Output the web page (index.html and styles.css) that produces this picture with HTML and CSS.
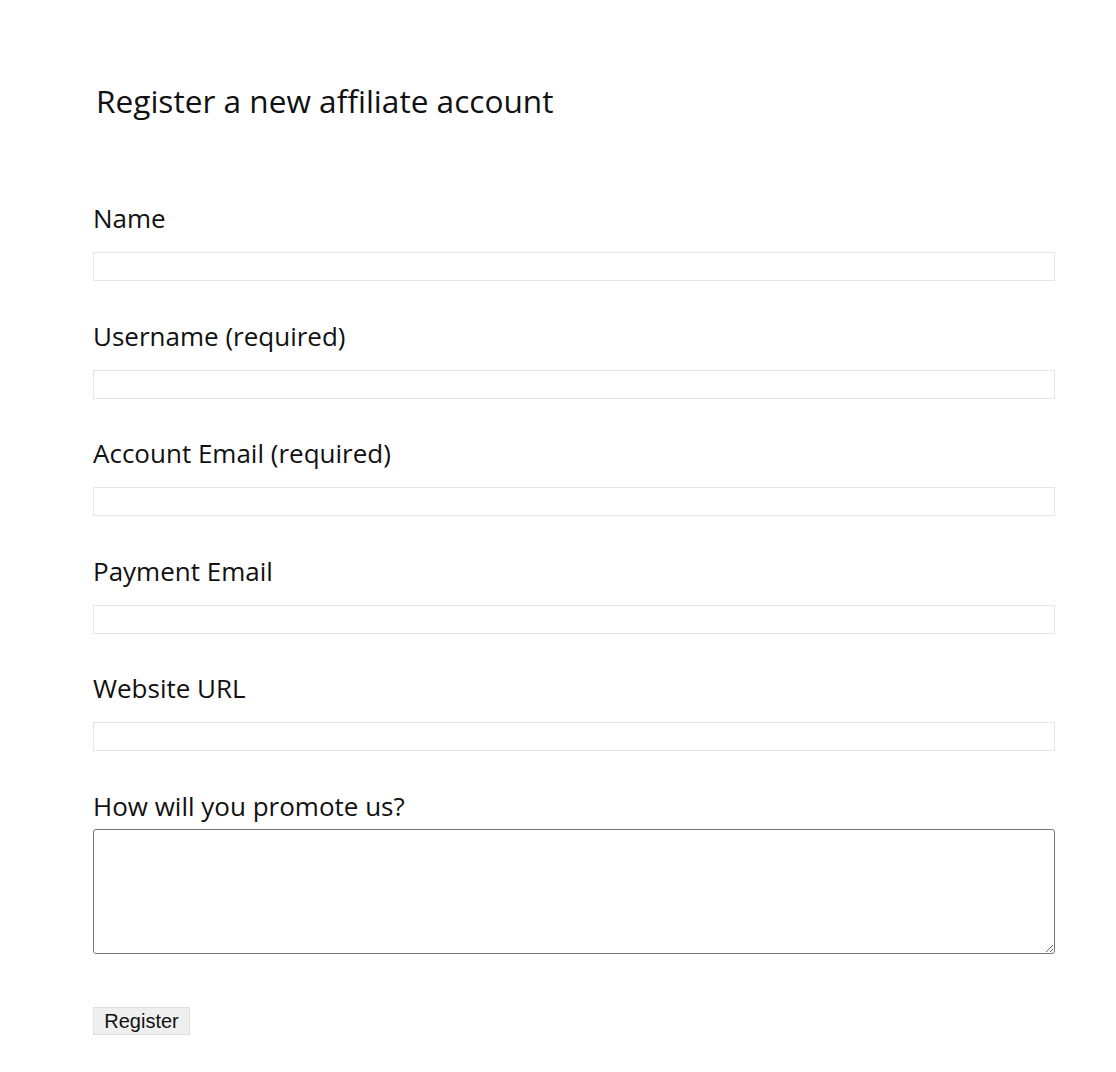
FILE: index.html
```html
<!DOCTYPE html>
<html lang="en">
<head>
<meta charset="utf-8">
<title>Register a new affiliate account</title>
<link rel="stylesheet" href="styles.css">
</head>
<body>
<main class="page">
  <h1 class="title">Register a new affiliate account</h1>
  <form class="form">
    <div class="field">
      <label class="label" for="name">Name</label>
      <input class="input" id="name" type="text">
    </div>
    <div class="field">
      <label class="label" for="username">Username (required)</label>
      <input class="input" id="username" type="text">
    </div>
    <div class="field">
      <label class="label" for="email">Account Email (required)</label>
      <input class="input" id="email" type="text">
    </div>
    <div class="field">
      <label class="label" for="payemail">Payment Email</label>
      <input class="input" id="payemail" type="text">
    </div>
    <div class="field">
      <label class="label" for="url">Website URL</label>
      <input class="input" id="url" type="text">
    </div>
    <div class="field field-area">
      <label class="label" for="promote">How will you promote us?</label>
      <textarea class="textarea" id="promote"></textarea>
    </div>
    <div class="actions">
      <button class="button" type="button">Register</button>
    </div>
  </form>
</main>
</body>
</html>
```

FILE: styles.css
```css
html, body {
  margin: 0;
  padding: 0;
  background: #ffffff;
}

.page {
  padding: 81px 0 0 93px;
  font-family: "Open Sans", "Noto Sans", sans-serif;
  color: #111111;
}

.title {
  margin: 0 0 0 3px;
  font-size: 31.6px;
  line-height: 40px;
  font-weight: 400;
}

.form {
  margin-top: 80px;
  display: flex;
  flex-direction: column;
}

.field {
  display: flex;
  flex-direction: column;
  margin-bottom: 37.5px;
}

.label {
  font-size: 26px;
  line-height: 34px;
  margin-bottom: 17px;
}

.input {
  box-sizing: border-box;
  width: 962px;
  height: 29px;
  margin: 0;
  border: 1px solid #e6e6e6;
  background: #ffffff;
  padding: 0 4px;
  outline: none;
}

.field-area {
  margin-bottom: 53px;
}

.field-area .label {
  margin-bottom: 6.5px;
}

.textarea {
  box-sizing: border-box;
  width: 962px;
  height: 125px;
  margin: 0;
  border: 1px solid #767676;
  border-radius: 3px;
  background: #ffffff;
  resize: both;
}

.button {
  width: 97px;
  height: 28px;
  padding: 0;
  font-family: "Liberation Sans", Arial, sans-serif;
  font-size: 20px;
  color: #111111;
  background: #efefef;
  border: 1px solid #e0e0e0;
  border-radius: 0;
}
```
